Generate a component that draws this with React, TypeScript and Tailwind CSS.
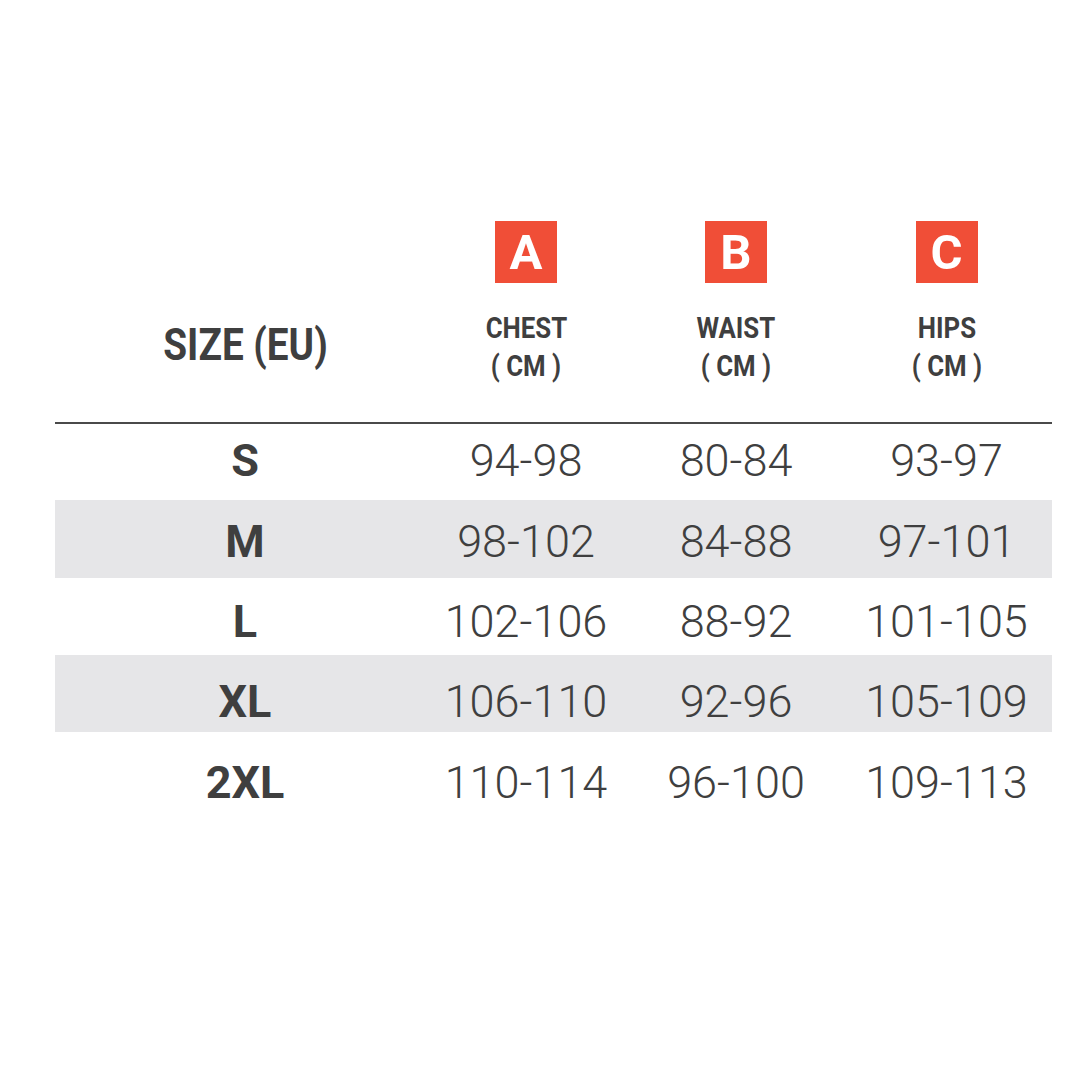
const rows = [
  { size: 'S', chest: '94-98', waist: '80-84', hips: '93-97', cls: 'h-[76px] pt-[14px] bg-white' },
  { size: 'M', chest: '98-102', waist: '84-88', hips: '97-101', cls: 'h-[78px] pt-[19px] bg-[#e6e6e8]' },
  { size: 'L', chest: '102-106', waist: '88-92', hips: '101-105', cls: 'h-[77px] pt-[21px] bg-white' },
  { size: 'XL', chest: '106-110', waist: '92-96', hips: '105-109', cls: 'h-[77px] pt-[24px] bg-[#e6e6e8]' },
  { size: '2XL', chest: '110-114', waist: '96-100', hips: '109-113', cls: 'h-[78px] pt-[28px] bg-white' },
];

const measures = [
  { letter: 'A', label: 'CHEST' },
  { letter: 'B', label: 'WAIST' },
  { letter: 'C', label: 'HIPS' },
];

const cols = 'grid grid-cols-[366px_210px_210px_211px]';

export default function App() {
  return (
    <div className="min-h-[1089px] w-[1089px] bg-white pl-[55px] pt-[221px] text-[#3f3f3f] [font-family:Roboto,'Liberation_Sans',sans-serif]">
      <div className="w-[997px]">
        {/* header */}
        <div className={`${cols} h-[201px]`}>
          <div className="flex justify-center pl-[14px] pt-[99px]">
            <span className="inline-block scale-x-[0.88] text-[44px] font-bold leading-[50px]">SIZE (EU)</span>
          </div>
          {measures.map((m) => (
            <div key={m.letter} className="flex flex-col items-center">
              <div className="flex h-[62px] w-[62px] items-center justify-center bg-[#f04e37] text-[49px] font-bold leading-none text-white">
                {m.letter}
              </div>
              <div className="mt-[26px] flex flex-col items-center text-[30px] font-bold leading-[38px]">
                <span className="inline-block scale-x-[0.86]">{m.label}</span>
                <span className="inline-block scale-x-[0.86]">( CM )</span>
              </div>
            </div>
          ))}
        </div>

        <div className="h-[2px] bg-[#4a4a4a]" />

        {rows.map((r) => (
          <div key={r.size} className={`${cols} ${r.cls} text-[45px] leading-[45px]`}>
            <div className="pl-[14px] text-center font-bold">{r.size}</div>
            <div className="text-center font-light">{r.chest}</div>
            <div className="text-center font-light">{r.waist}</div>
            <div className="text-center font-light">{r.hips}</div>
          </div>
        ))}
      </div>
    </div>
  );
}
